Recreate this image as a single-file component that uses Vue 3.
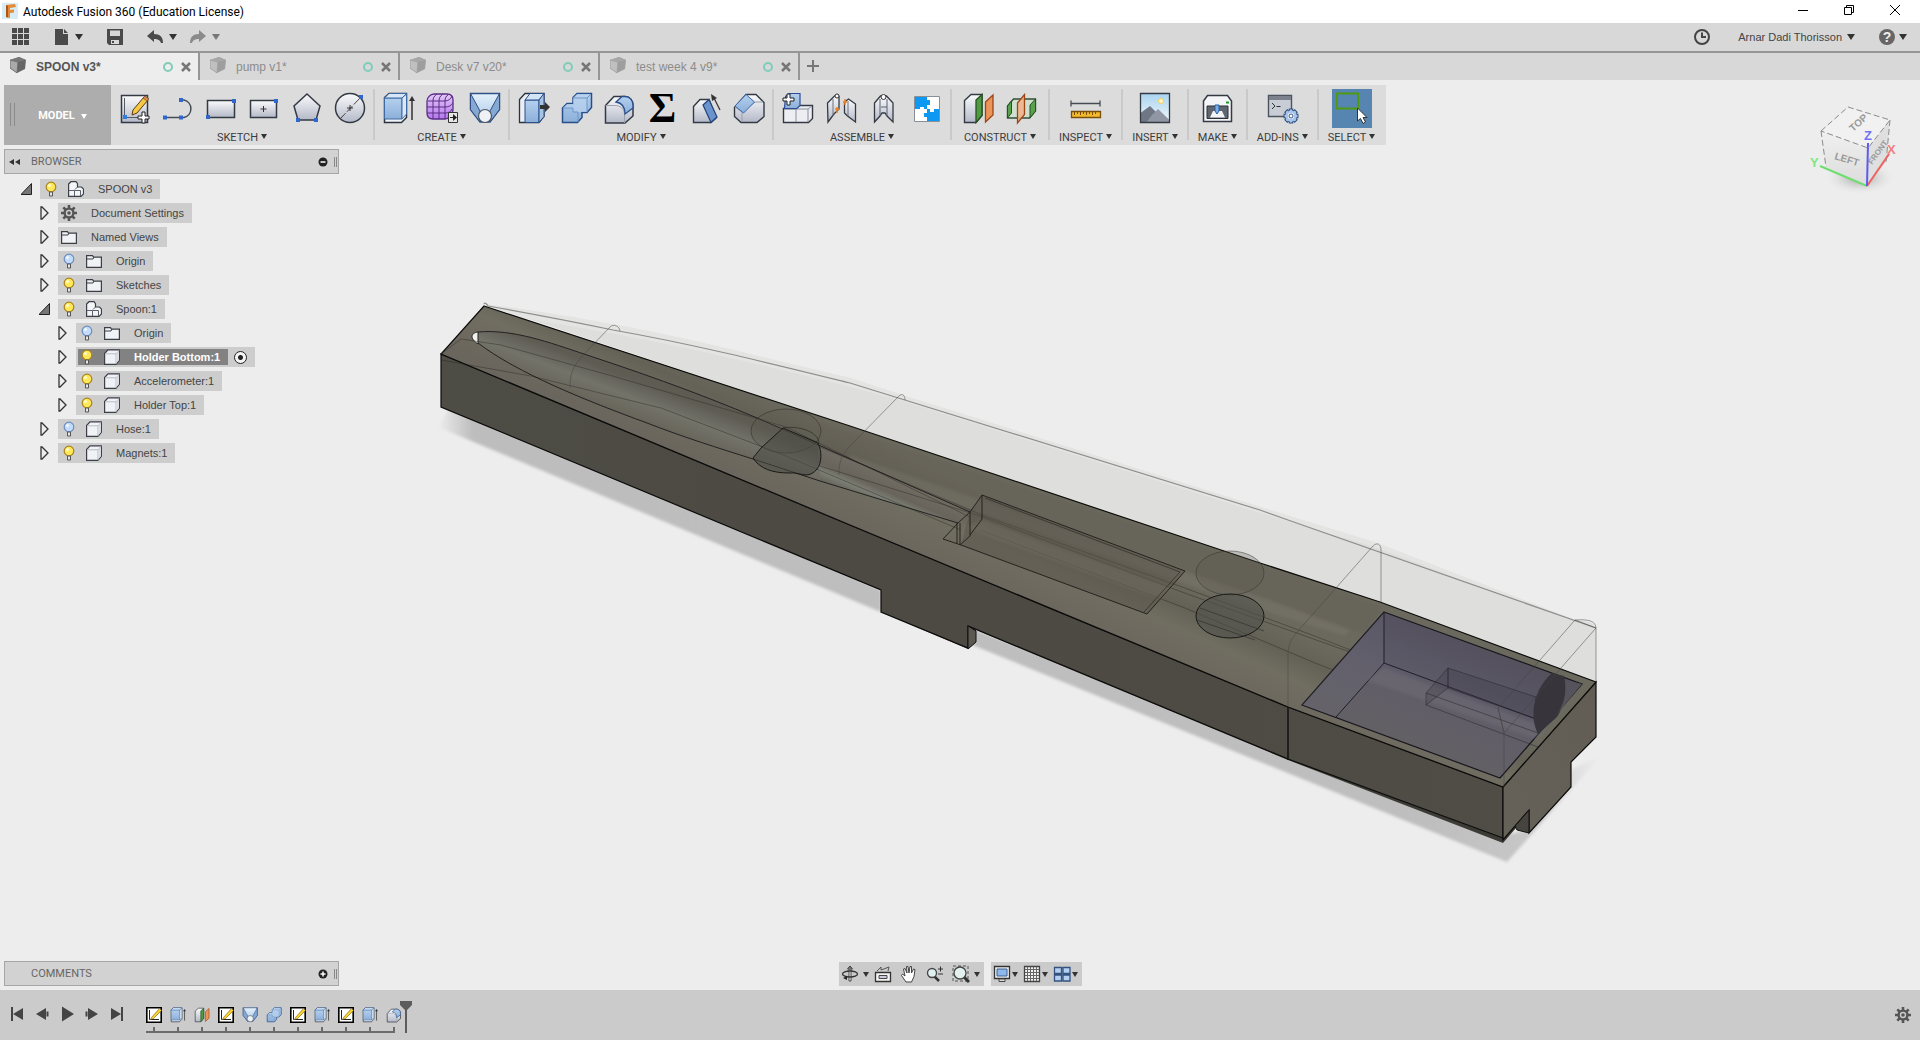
<script setup>
import { ref } from 'vue'

const tabs = [
  { name: 'SPOON v3*', active: true },
  { name: 'pump v1*', active: false },
  { name: 'Desk v7 v20*', active: false },
  { name: 'test week 4 v9*', active: false },
]

const groups = [
  { label: 'SKETCH', icons: ['sketch-new', 'line', 'rect', 'rect-center', 'polygon', 'circle'] },
  { label: 'CREATE', icons: ['extrude', 'form', 'loft'] },
  { label: 'MODIFY', icons: ['press-pull', 'combine', 'fillet', 'sigma', 'draft', 'chamfer'] },
  { label: 'ASSEMBLE', icons: ['new-component', 'joint', 'as-built-joint', 'puzzle'] },
  { label: 'CONSTRUCT', icons: ['offset-plane', 'mid-plane'], wide: true },
  { label: 'INSPECT', icons: ['measure'] },
  { label: 'INSERT', icons: ['picture'] },
  { label: 'MAKE', icons: ['printer'] },
  { label: 'ADD-INS', icons: ['scripts'] },
  { label: 'SELECT', icons: ['select'], active: true },
]

const tree = [
  { name: 'SPOON v3', level: 0, open: true, bulb: 'on', icon: 'assembly' },
  { name: 'Document Settings', level: 1, icon: 'gear' },
  { name: 'Named Views', level: 1, icon: 'folder' },
  { name: 'Origin', level: 1, bulb: 'off', icon: 'folder' },
  { name: 'Sketches', level: 1, bulb: 'on', icon: 'folder' },
  { name: 'Spoon:1', level: 1, open: true, bulb: 'on', icon: 'assembly' },
  { name: 'Origin', level: 2, bulb: 'off', icon: 'folder' },
  { name: 'Holder Bottom:1', level: 2, bulb: 'on', icon: 'body', selected: true },
  { name: 'Accelerometer:1', level: 2, bulb: 'on', icon: 'body' },
  { name: 'Holder Top:1', level: 2, bulb: 'on', icon: 'body' },
  { name: 'Hose:1', level: 1, bulb: 'off', icon: 'body' },
  { name: 'Magnets:1', level: 1, bulb: 'on', icon: 'body' },
]

const playback = ['to-start', 'step-back', 'play', 'step-forward', 'to-end']
const features = [
  'sketch-small', 'extrude', 'offset-plane', 'sketch-small', 'loft', 'combine',
  'sketch-small', 'extrude', 'sketch-small', 'extrude', 'fillet',
]
const activeComponent = ref('Holder Bottom:1')
</script>

<template>
  <div class="app">
    <svg class="defs" aria-hidden="true">
      <defs>
        <linearGradient id="g-grey" x1="0" y1="0" x2="0" y2="1"><stop offset="0" stop-color="#fbfbfc" /><stop offset="1" stop-color="#b4b9c8" /></linearGradient>
        <linearGradient id="g-blue" x1="0" y1="0" x2="0" y2="1"><stop offset="0" stop-color="#b4d0ee" /><stop offset="1" stop-color="#8cafd9" /></linearGradient>
        <linearGradient id="g-light" x1="0" y1="0" x2="0" y2="1"><stop offset="0" stop-color="#e4f1fb" /><stop offset="1" stop-color="#a9c6e6" /></linearGradient>
        <linearGradient id="g-purple" x1="0" y1="0" x2="0" y2="1"><stop offset="0" stop-color="#e2c8f5" /><stop offset="1" stop-color="#b678ee" /></linearGradient>
        <linearGradient id="g-sky" x1="0" y1="0" x2="0" y2="1"><stop offset="0" stop-color="#a9d3ef" /><stop offset="1" stop-color="#f2f8fb" /></linearGradient>
      </defs>

      <symbol id="sketch-new" viewBox="0 0 33 33">
        <path d="M3.500 3.500h26v27h-26z" fill="url(#g-grey)" stroke="#333a44" stroke-width="1.500" />
        <path d="M6.500 6v19.500H20" fill="none" stroke="#555c66" />
        <path d="M5 23h4v4H5z" fill="#2f7fe0" />
        <path d="M15 18 26 5l4 3-11 13-5 2z" fill="#f6c945" stroke="#5a3a12" />
        <path d="m25 6 4 3 2-2-4-3z" fill="#e08a4a" stroke="#5a3a12" stroke-width=".6" />
        <path d="M24 20h3v4h4v3h-4v4h-3v-4h-4v-3h4z" fill="#fff" stroke="#222" />
      </symbol>
      <symbol id="line" viewBox="0 0 33 33">
        <path d="M4 25.500h16M20 8h3a9 9 0 0 1 0 17.500h-3" fill="none" stroke="#444b55" stroke-width="1.500" />
        <path d="M2 23.500h4v4H2zM18 23.500h4v4h-4zM18 6h4v4h-4z" fill="#2f66d0" />
      </symbol>
      <symbol id="rect" viewBox="0 0 33 33">
        <path d="M3.500 8.500h27v17h-27z" fill="url(#g-grey)" stroke="#333a44" stroke-width="1.500" />
        <path d="M2 23h4v4H2zM28 7h4v4h-4z" fill="#2f66d0" />
      </symbol>
      <symbol id="rect-center" viewBox="0 0 33 33">
        <path d="M3.500 8.500h26v17h-26z" fill="url(#g-grey)" stroke="#333a44" stroke-width="1.500" />
        <path d="M16.500 14v6M13.500 17h6" stroke="#333" />
        <path d="M27 7h4v4h-4z" fill="#2f66d0" />
      </symbol>
      <symbol id="polygon" viewBox="0 0 33 33">
        <path d="m17 2 13 12-4 14H8L4 14z" fill="url(#g-grey)" stroke="#333a44" stroke-width="1.500" />
        <path d="M6 26h4v4H6zM24 26h4v4h-4z" fill="#2f66d0" />
      </symbol>
      <symbol id="circle" viewBox="0 0 33 33">
        <circle cx="17" cy="16" r="14.500" fill="url(#g-grey)" stroke="#333a44" stroke-width="1.500" />
        <path d="M7 27 28 5" stroke="#444" stroke-dasharray="8 2" />
        <path d="M17 13v6M14 16h6" stroke="#333" />
        <path d="M26 3h4v4h-4z" fill="#2f66d0" />
      </symbol>
      <symbol id="extrude" viewBox="0 0 33 33">
        <path d="M2.500 5.500 7 1.500h17.500v24l-5 5h-17z" fill="#f1f3f6" stroke="#2b3341" stroke-width="1.500" />
        <path d="M2.500 6v21H20V6z" fill="url(#g-blue)" stroke="#3f6ba3" />
        <path d="M20 6l4.500-4V22L20 27z" fill="#dbe9f7" stroke="#3f6ba3" />
        <path d="M2.500 6 7 1.500h17.500L20 6z" fill="#d6e6f6" stroke="#3f6ba3" />
        <path d="M30 28V6" stroke="#333" stroke-width="1.500" /><path d="m27 9 3-5 3 5z" fill="#333" />
      </symbol>
      <symbol id="form" viewBox="0 0 33 33">
        <path d="M9 2h13c4 0 6 2 6 6v10c0 3-4 9-8 9H8c-4 0-6-2-6-6V9c0-3 3-7 7-7z" fill="url(#g-purple)" stroke="#5a2d86" stroke-width="1.300" />
        <path d="M3 9h17c3 0 6-2 7-5M2 15h18c3 0 6-1 8-4M2 21h18c3 0 6-1 7-4M8 27V9c0-3 1-5 4-7M14 27V9c0-3 1-5 4-7M20 27V9c0-3 1-5 3-6" fill="none" stroke="#5a2d86" />
        <path d="M23.500 20.500h9v10h-9z" fill="#e8e8e8" stroke="#333" /><path d="M25 25h3v-3l4 3.500-4 3.500v-3h-3z" fill="#222" />
      </symbol>
      <symbol id="loft" viewBox="0 0 33 33">
        <path d="M2.500 1.500h29v16L22 30H12L2.500 17.500z" fill="url(#g-light)" stroke="#2f4f86" stroke-width="1.500" />
        <path d="M2.500 1.500 12 19v11L2.500 17.500zM31.500 1.500 22 19v11l9.500-12.500z" fill="#86a9d4" stroke="#2f4f86" />
        <circle cx="17" cy="24" r="6.500" fill="#eef1f5" stroke="#4b5563" stroke-width="1.200" />
      </symbol>
      <symbol id="press-pull" viewBox="0 0 33 33">
        <path d="M2.500 7.500 8 1.500h19v23l-5 6H2.500z" fill="#eceef2" stroke="#2b3341" stroke-width="1.300" />
        <path d="M8 8h14v22.500H8z" fill="url(#g-blue)" stroke="#284f8c" /><path d="m8 8 5-6.500h14L22 8z" fill="#d3e4f6" stroke="#284f8c" /><path d="m22 8 5-6.500v23l-5 6z" fill="#a8c4e4" stroke="#284f8c" />
        <path d="M23 13h5v-3l5 5-5 5v-3h-5z" fill="#333" />
      </symbol>
      <symbol id="combine" viewBox="0 0 33 33">
        <path d="M2.500 16 7 11.500h6v-6l4-4h14.500v14l-4.500 5h-5v5l-4.500 5h-15z" fill="url(#g-blue)" stroke="#284f8c" stroke-width="1.500" />
        <path d="M3 16h10v4h14V6H13v6H7zM13 6l4-4h14l-4 4z" fill="#b9d2ee" opacity=".7" /><path d="M13 6h14v14M27 6l4-4M3 16h10v4h5v10" fill="none" stroke="#6f96c8" />
      </symbol>
      <symbol id="fillet" viewBox="0 0 33 33">
        <path d="M2.500 13.500 11 4.500h11c5 0 8 4 8 9V24l-8 7H2.500z" fill="url(#g-grey)" stroke="#333a44" stroke-width="1.500" />
        <path d="M2.500 13.500h9c6 0 9 3 10 8V31" fill="none" stroke="#9aa0ac" />
        <path d="m13 10 6-5.500h3c5 0 8 4 8 9V16l-8 6c0-6-2-11-9-12z" fill="url(#g-blue)" stroke="#284f8c" stroke-width="1.300" />
      </symbol>
      <symbol id="draft" viewBox="0 0 33 33">
        <path d="M4.500 14.500 11 7.500h9L27 26l-5 4.500H4.500z" fill="url(#g-grey)" stroke="#333a44" stroke-width="1.400" />
        <path d="m14 13 6-5.500L28 25l-6 5.500z" fill="#6c94cc" stroke="#24467c" stroke-width="1.300" />
        <path d="m31 18-7-14" stroke="#333" stroke-width="1.300" /><path d="m22 2 1 7 5-3z" fill="#333" />
      </symbol>
      <symbol id="chamfer" viewBox="0 0 33 33">
        <path d="M2.500 15.500 14 2.500h10l8 8v14l-7 6H9l-6.500-6z" fill="url(#g-grey)" stroke="#333a44" stroke-width="1.400" />
        <path d="M10 30V20l13-10h8M10 20l-7-5" fill="none" stroke="#9aa0ac" />
        <path d="M3 14 14 2.500 22.500 10l-11 11z" fill="url(#g-blue)" stroke="#3668aa" />
      </symbol>
      <symbol id="new-component" viewBox="0 0 33 33">
        <path d="M2.500 16.500h12l3-3h14v13l-4 4h-25z" fill="#eceef2" stroke="#333a44" stroke-width="1.400" /><path d="M15 17v13M15 17h12v13M27 17l4-3M3 17h12" fill="none" stroke="#8a909c" />
        <path d="M4.500 4.500 8 1.500h11v12l-3 3H3.500z" fill="url(#g-blue)" stroke="#2b4b9b" stroke-width="1.200" />
        <path d="M6 2h3v4h4v3H9v4H6V9H2V6h4z" fill="#fff" stroke="#222" />
      </symbol>
      <symbol id="joint" viewBox="0 0 33 33">
        <path d="m3.500 11 7-7 3-1.500 1.500 2V17l-5 5-6 8z" fill="url(#g-grey)" stroke="#333a44" stroke-width="1.300" /><path d="M9 7v17" stroke="#6b7280" /><circle cx="13" cy="4" r="2" fill="#fff" stroke="#333" />
        <path d="m31.500 12-7-5-4 3v11l3 3 8 6z" fill="url(#g-grey)" stroke="#333a44" stroke-width="1.300" /><path d="M24 9v15" stroke="#6b7280" />
        <path d="M13 15v6M21 7v6M11 17h4M19 10h4" stroke="#f08024" stroke-width="1.500" />
      </symbol>
      <symbol id="as-built-joint" viewBox="0 0 33 33">
        <path d="m7.500 11 6-7h6l6.500 7v19l-6-6-2-3h-3l-2 3-5.500 6z" fill="url(#g-grey)" stroke="#333a44" stroke-width="1.300" /><path d="M13 7v17M20 7v17M14 15h6" stroke="#5b626e" /><circle cx="16.500" cy="5" r="2.500" fill="#fff" stroke="#333" />
      </symbol>
      <symbol id="puzzle" viewBox="0 0 33 33">
        <path d="M4.500 4.500h25v25h-25z" fill="#fff" stroke="#8a8f96" />
        <path d="M5 5h12v3h3v5h-3v4h-3v-2h-4v2H5zM17 17h3v3h4v-3h5v12H17v-4h-3v-4h3z" fill="#0d99f2" />
      </symbol>
      <symbol id="offset-plane" viewBox="0 0 33 33">
        <path d="M2.500 8.500 9 2.500h11v21l-6 7H2.500z" fill="url(#g-grey)" stroke="#333a44" stroke-width="1.400" /><path d="m14 8 6-5.500v21l-6 7z" fill="#4f9a43" stroke="#26531f" stroke-width="1.300" />
        <path d="m23.500 10 7.500-7v20l-7.500 7z" fill="#ec9559" stroke="#9c4517" stroke-width="1.300" />
      </symbol>
      <symbol id="mid-plane" viewBox="0 0 33 33">
        <path d="m2.500 14 6-7h22v12l-6 7h-22z" fill="#cfe0d0" stroke="#2f4f35" stroke-width="1.400" /><path d="m2.500 14 4-5v12l-4 5zM25 13l5.500-6v12L25 26z" fill="#5aa04d" stroke="#26531f" /><path d="m12.500 11 7-8.500v20l-7 8.500z" fill="#f0b48c" fill-opacity=".9" stroke="#9c4517" stroke-width="1.300" />
      </symbol>
      <symbol id="measure" viewBox="0 0 33 33">
        <path d="M2 11.500h29M2 8.500v6M31 8.500v6" stroke="#444b55" stroke-width="1.300" />
        <path d="M2.500 19.500h29v6h-29z" fill="#f3bb2c" stroke="#7a4f0c" stroke-width="1.300" /><path d="M5.500 20v3M8.500 20v2M11.500 20v3M14.500 20v2M17.500 20v3M20.500 20v2M23.500 20v3M26.500 20v2" stroke="#7a4f0c" />
      </symbol>
      <symbol id="picture" viewBox="0 0 33 33">
        <path d="M2.500 1.500h29v29h-29z" fill="url(#g-sky)" /><circle cx="23" cy="9" r="2.500" fill="#fff6c0" stroke="#f2cf5a" />
        <path d="M2.500 21 12 14l8 8 2 8.500H2.500z" fill="#6f7784" /><path d="m14 23 6-6 11.500 11v3H8z" fill="#9097a3" /><path d="M2.500 1.500h29v29h-29z" fill="none" stroke="#333a44" stroke-width="1.300" />
      </symbol>
      <symbol id="printer" viewBox="0 0 33 33">
        <path d="m2.500 9 4-5.500h20l4 5.500v20.500h-28z" fill="#f4f5f7" stroke="#333a44" stroke-width="1.500" /><path d="M6 14h21v12.500H6z" fill="#60666f" stroke="#2c3138" /><path d="M9 25.500 12 19h9l3 6.500z" fill="#f3f4f6" /><path d="M14 13h4v6l-2 3-2-3z" fill="#79aee8" stroke="#2c5fa0" /><path d="M25 9.500h3v2h-3z" fill="#189a2c" />
      </symbol>
      <symbol id="scripts" viewBox="0 0 33 33">
        <path d="M2.500 3.500h23v21h-23z" fill="#c8ccd5" stroke="#4c525e" stroke-width="1.400" /><path d="M3 4h22v4H3z" fill="#7b818d" /><path d="m6 11 3 3-3 3M10.500 14.500h4" fill="none" stroke="#2d3238" />
        <path d="M25 16.500v15M17.500 24h15M19.700 18.700l10.600 10.600M30.300 18.700 19.700 29.300" stroke="#2f4f80" stroke-width="4.500" /><path d="M25 17.500v13M18.500 24h13M20.400 19.400l9.200 9.200M29.600 19.400l-9.200 9.200" stroke="#a9c6ea" stroke-width="2.500" />
        <circle cx="25" cy="24" r="4.300" fill="#fff" stroke="#a9c6ea" stroke-width="2.500" /><circle cx="25" cy="24" r="2" fill="#fff" stroke="#34537f" />
      </symbol>
      <symbol id="select" viewBox="0 0 33 33">
        <path d="M2 1.500h21v15H2z" fill="none" stroke="#4f9a12" stroke-width="2" /><path d="M22.500 16v13l3-2.500 2.500 5 2.500-1.500-2.500-4.500h4z" fill="#fff" stroke="#333" />
      </symbol>
      <symbol id="sketch-small" viewBox="0 0 16 16">
        <path d="M.8.800h14.400v14.400H.8z" fill="#fff" stroke="#000" stroke-width="1.600" /><path d="M3.500 3v9.500H13" fill="none" stroke="#222" /><path d="m5.500 10.500 8-9 2 2-8 8-3 1z" fill="#f8d22c" stroke="#806010" stroke-width=".6" />
      </symbol>

      <symbol id="bulb-on" viewBox="0 0 16 16"><circle cx="8" cy="6" r="4.800" fill="#ffe95a" stroke="#a8861c" stroke-width="1.200" /><circle cx="6.500" cy="4.500" r="1.500" fill="#fffbd0" /><path d="M6.500 11h3v4h-3z" fill="#e8e8e8" stroke="#555" /></symbol>
      <symbol id="bulb-off" viewBox="0 0 16 16"><circle cx="8" cy="6" r="4.800" fill="#c3dcfa" stroke="#6d8cc0" stroke-width="1.200" /><circle cx="6.500" cy="4.500" r="1.500" fill="#f2f8ff" /><path d="M6.500 11h3v4h-3z" fill="#e8e8e8" stroke="#555" /></symbol>
      <symbol id="folder" viewBox="0 0 16 16"><path d="M.6 14.400V2.600h5.900l1 1.500h7.900v10.300z" fill="#f0f2f5" stroke="#3b4048" stroke-width="1.200" /><path d="M1 6h6l1-2" fill="none" stroke="#3b4048" /></symbol>
      <symbol id="body" viewBox="0 0 16 16"><path d="M.6 4.500 4 .800h11.400v10.500l-3.500 4H.6z" fill="#f1f2f5" stroke="#3b4048" stroke-width="1.200" /><path d="M12 15V5L15 1.500M1 4.800h11" fill="none" stroke="#b9bdc6" /><path d="M12.500 5 15 2v9l-2.500 3z" fill="#d9dce3" /></symbol>
      <symbol id="assembly" viewBox="0 0 16 16"><path d="M.6 3 3 .700h5l1.500 2V6h4l2 2v5l-2.500 2.400H.6z" fill="#f4f5f7" stroke="#3b4048" stroke-width="1.200" /><path d="M1 9.500h5.500V15M6.500 9.500h6V15M7 8.500 9.500 6" fill="none" stroke="#5c626c" /></symbol>
      <symbol id="gear" viewBox="0 0 16 16"><path d="M8 0v16M0 8h16M2.300 2.300l11.400 11.400M13.700 2.300 2.300 13.700" stroke="#555" stroke-width="2.600" /><circle cx="8" cy="8" r="5.600" fill="#555" /><circle cx="8" cy="8" r="3.200" fill="#cdcdcd" /><circle cx="8" cy="8" r="1.800" fill="#555" /></symbol>
      <symbol id="cube" viewBox="0 0 16 16"><path d="m0 3 9-3 7 3-1 9-8 4-7-5z" fill="#666" /><path d="m0 3 8 2-1 11-7-5z" fill="#aaa" stroke="#666" stroke-width=".8" /><path d="m0 3 9-3 7 3-8 2z" fill="#777" /></symbol>

      <symbol id="to-start" viewBox="0 0 16 16"><path d="M2 1h2v14H2zM14 2v12L4 8z" fill="#444" /></symbol>
      <symbol id="step-back" viewBox="0 0 16 16"><path d="M12 2v12L2 8zM12.500 5.500h2v5h-2z" fill="#444" /></symbol>
      <symbol id="play" viewBox="0 0 16 16"><path d="m3 .500 12 7.500-12 7.500z" fill="#444" /></symbol>
      <symbol id="step-forward" viewBox="0 0 16 16"><path d="m4 2 10 6-10 6zM1.500 5.500h2v5h-2z" fill="#444" /></symbol>
      <symbol id="to-end" viewBox="0 0 16 16"><path d="M12 1h2v14h-2zM2 2v12l10-6z" fill="#444" /></symbol>
    </svg>

    <header class="titlebar">
      <svg class="logo" viewBox="0 0 16 16"><path d="M0 0h16v16H0z" fill="#d7ecf5" /><path d="M4 2 13 1l1 3-6 1v2l4-.5v3L8 10v5l-4-1z" fill="#e58a35" /><path d="M4 2 6 3v11.500L4 14z" fill="#a8561b" /></svg>
      <h1>Autodesk Fusion 360 (Education License)</h1>
      <div class="window-buttons">
        <button aria-label="Minimize"><svg viewBox="0 0 12 12"><path d="M1 6.500h10" stroke="#000" /></svg></button>
        <button aria-label="Restore"><svg viewBox="0 0 12 12"><path d="M1.500 3.500h7v7h-7zM3.500 3.500v-2h7v7h-2" fill="none" stroke="#000" /></svg></button>
        <button aria-label="Close"><svg viewBox="0 0 12 12"><path d="m1 1 10 10M11 1 1 11" stroke="#000" /></svg></button>
      </div>
    </header>

    <nav class="quickbar">
      <button class="qb grid-btn" aria-label="Data panel"><svg viewBox="0 0 18 18"><path d="M0 0h5v5H0zM6 0h5v5H6zM12 0h5v5h-5zM0 6h5v5H0zM6 6h5v5H6zM12 6h5v5h-5zM0 12h5v5H0zM6 12h5v5H6zM12 12h5v5h-5z" fill="#4a4a4a" /></svg></button>
      <button class="qb file-btn" aria-label="File"><svg viewBox="0 0 18 18"><path d="M3 1h8v5h5v11H3z" fill="#4a4a4a" /><path d="m12 1 4 4h-4z" fill="#4a4a4a" /></svg><i class="caret"></i></button>
      <button class="qb save-btn" aria-label="Save"><svg viewBox="0 0 18 18"><path d="M1 1h16v16H3l-2-2z" fill="#4a4a4a" /><path d="M4 2.500h10V8H4zM5 12h8v4H5z" fill="#d8d8d8" /><path d="M6 13h2v2H6z" fill="#4a4a4a" /></svg></button>
      <button class="qb undo-btn" aria-label="Undo"><svg viewBox="0 0 18 18"><path d="M1 8 8 2v4c6 0 9 3 9 9h-2c-1-3-3-4-7-4v3z" fill="#4a4a4a" /></svg><i class="caret"></i></button>
      <button class="qb redo-btn" aria-label="Redo"><svg viewBox="0 0 18 18"><path d="m17 8-7-6v4c-6 0-9 3-9 9h2c1-3 3-4 7-4v3z" fill="#8a8a8a" /></svg><i class="caret dim"></i></button>
      <div class="account">
        <button class="clock" aria-label="Job status"><svg viewBox="0 0 18 18"><circle cx="9" cy="9" r="7" fill="none" stroke="#444" stroke-width="2" /><path d="M9 4.500V9h4" fill="none" stroke="#444" stroke-width="2" /></svg></button>
        <button class="user">Arnar Dadi Thorisson<i class="caret"></i></button>
        <button class="help" aria-label="Help"><b>?</b><i class="caret"></i></button>
      </div>
    </nav>

    <div class="tabs" role="tablist">
      <div v-for="tab in tabs" :key="tab.name" class="tab" :class="{ active: tab.active }">
        <button class="tab-name" role="tab" :aria-selected="tab.active"><svg class="tab-icon"><use href="#cube" /></svg>{{ tab.name }}</button>
        <i class="ring"></i>
        <button class="close" aria-label="Close tab"><svg viewBox="0 0 10 10"><path d="m1 1 8 8M9 1 1 9" stroke="currentColor" stroke-width="2.500" /></svg></button>
      </div>
      <button class="add-tab" aria-label="New tab"><svg viewBox="0 0 12 12"><path d="M6 0v12M0 6h12" stroke="#777" stroke-width="2" /></svg></button>
    </div>

    <main class="workspace">
      <svg class="scene" viewBox="0 80 1920 910" role="img" aria-label="Spoon holder model">
        <defs>
          <linearGradient id="top-face" gradientUnits="userSpaceOnUse" x1="800" y1="410" x2="764" y2="490"><stop offset="0" stop-color="#6b685d" /><stop offset=".25" stop-color="#646156" /><stop offset=".5" stop-color="#706d61" /><stop offset="1" stop-color="#6b665d" /></linearGradient>
          <linearGradient id="front-face" x1="0" y1="0" x2="1" y2="0"><stop offset="0" stop-color="#4d4c45" /><stop offset=".5" stop-color="#4d4943" /><stop offset="1" stop-color="#4f4d46" /></linearGradient>
          <linearGradient id="cavity" gradientUnits="userSpaceOnUse" x1="680" y1="375" x2="655" y2="440"><stop offset="0" stop-color="#5b5850" /><stop offset=".3" stop-color="#5f5c54" /><stop offset=".55" stop-color="#73736a" /><stop offset=".75" stop-color="#6b685e" /><stop offset="1" stop-color="#5c5b52" /></linearGradient>
          <linearGradient id="cavity-end" gradientUnits="userSpaceOnUse" x1="895" y1="470" x2="880" y2="505"><stop offset="0" stop-color="#767167" /><stop offset=".6" stop-color="#68645b" /><stop offset=".8" stop-color="#7c7f75" /><stop offset="1" stop-color="#68675d" /></linearGradient>
          <linearGradient id="pocket" gradientUnits="userSpaceOnUse" x1="1475" y1="640" x2="1430" y2="750"><stop offset="0" stop-color="#54505c" /><stop offset=".3" stop-color="#595665" /><stop offset=".55" stop-color="#605d69" /><stop offset="1" stop-color="#636065" /></linearGradient>
          <linearGradient id="right-face" x1="0" y1="1" x2="1" y2="0"><stop offset="0" stop-color="#656259" /><stop offset="1" stop-color="#625c54" /></linearGradient>
          <linearGradient id="shade" x1="0" y1="0" x2="1" y2="0"><stop offset="0" stop-color="#bdbdbd" stop-opacity="0" /><stop offset=".03" stop-color="#bdbdbd" /><stop offset=".85" stop-color="#bebebe" /><stop offset=".95" stop-color="#c8c8c8" /><stop offset="1" stop-color="#d4d4d4" stop-opacity="0" /></linearGradient>
          <filter id="soft"><feGaussianBlur stdDeviation="1.500" /></filter>
        </defs>

        <path d="M438 427 455 400 881 590v22zM960 640l16-10 527 205 26-5 42-60 31-15-95 107z" fill="url(#shade)" filter="url(#soft)" />

        <path d="M484 304c40 5 90 13 133 21 80 15 160 36 233 53l52 17 358 112 117 36 198 77c14 1 21 3 21 10v54L850 426z" fill="#dededc" />
        <path d="M484 304c40 5 90 13 133 21 80 15 160 36 233 53l52 17 358 112 117 36 198 77-3 1-197-74-118-35-358-112-52-14c-75-19-165-40-237-53-45-8-90-16-129-21z" fill="#e4e4e3" />

        <path d="m441 407 440 183v22l87 37 8-7v-12l312 130 215 83 26-30v20l42-46v-25l25-25v-55l-93 105z" fill="#3c3b36" />
        <path d="m441 354 409 171 438 182 215 80v51l-215-79-320-133v22l-87-36v-22L441 407z" fill="url(#front-face)" stroke="#0c0c0b" stroke-width="1.200" />
        <path d="m968 626 8 5v11l-8 7z" fill="#5b5851" stroke="#111" />
        <path d="m1503 787 93-105v55l-25 25v25l-42 46v-23l-26 30z" fill="url(#right-face)" stroke="#0c0c0b" stroke-width="1.200" />
        <path d="m1529 810-14 16 2 4 12 3z" fill="#46443e" stroke="#111" />
        <path d="M484 306 850 426l410 137 120 39 216 80-93 105-215-80-438-182-409-171z" fill="url(#top-face)" stroke="#0c0c0b" stroke-width="1.200" />
        <path d="M820 421 1260 565l120 40v7l-15 22L820 452z" fill="#5b584e" opacity=".22" filter="url(#soft)" />
        <path d="m850 455 420 145 80 30-5 6-80-25-415-143z" fill="#858277" opacity=".28" filter="url(#soft)" />

        <path d="M478 332c35-3 70 10 109 23 70 23 135 47 193 73l190 84-12 11-138-42-67-22c-35-11-70-22-106-36-60-22-130-50-169-80-8-6-6-10 0-11z" fill="url(#cavity)" />
        <path d="m818 445 152 67-12 11-138-42z" fill="url(#cavity-end)" />
        <path d="M478 332c35-3 70 10 109 23 70 23 135 47 193 73l190 84M958 523l-138-42-67-22c-35-11-70-22-106-36-60-22-130-50-169-80" fill="none" stroke="#222" />
        <path d="M478 332v12c-8-5-8-11 0-12z" fill="#f0f0ee" stroke="#222" />
        <g fill="none" stroke="#24231f" stroke-opacity=".4">
          <path d="m441 354 20-15 40 6 115 32 170 50 184 90" />
          <path d="m441 360 90 16 130 32 120 46 180 76" />
          <path d="m820 447 162 68 200 72 130 48 72 28" />
          <path d="m820 466 160 50 210 79 160 57" />
          <path d="m980 530 205 78 130 55 65 25" />
        </g>
        <ellipse cx="786" cy="431" rx="35" ry="22" fill="#57554c" fill-opacity=".2" stroke="#33322c" stroke-opacity=".6" />
        <path d="m783 428 35 15c4 8 4 20-1 26-3 4-7 6-11 6-5 0-10-3-17-2-16 0-29-4-36-15l8-10z" fill="#4b4a43" fill-opacity=".55" stroke="#191916" />
        <path d="M783 428c20-3 36 6 36 15" fill="none" stroke="#222" stroke-opacity=".6" />
        <ellipse cx="1230" cy="573" rx="34" ry="22" fill="#57554c" fill-opacity=".25" stroke="#33322c" stroke-opacity=".5" />
        <ellipse cx="1230" cy="616" rx="34" ry="22" fill="#50514b" fill-opacity=".6" stroke="#191916" />
        <path d="m1200 608 64 23M1197 620l58 20" stroke="#222" stroke-opacity=".5" />

        <path d="m982 495 203 76-38 43-186-69 9-33z" fill="#57544b" fill-opacity=".5" />
        <path d="m982 520 190 68-12 12-195-72z" fill="#7a7469" opacity=".35" filter="url(#soft)" />
        <path d="m970 512 12-17 203 76-38 43-186-69-18-6 15-16" fill="none" stroke="#24231f" />
        <path d="m985 498 195 74-36 40" fill="none" stroke="#24231f" stroke-opacity=".6" />
        <path d="M982 495v24l-12 16M970 512v24l-10 9v-22M957 523v20M958 523l12-11" fill="none" stroke="#24231f" />

        <path d="m1384 612 198 72-82 94-198-73z" fill="url(#pocket)" stroke="#17161c" stroke-width="1.200" />
        <path d="m1384 612v51l-48 54-34-12z" fill="#6d6a78" fill-opacity=".25" />
        <path d="M1384 612v51l-48 54M1384 663l163 60" fill="none" stroke="#1f1e27" />
        <path d="m1384 668 163 60-9 12-172-60z" fill="#77757c" opacity=".35" filter="url(#soft)" />
        <path d="m1448 668 88 29v22l-88-31zM1448 668v20l-22 17v-12zM1426 705l112 42M1426 693l112 40" fill="#3f3c47" fill-opacity=".3" stroke="#25242c" stroke-opacity=".5" />
        <path d="m1552 673 12 3c4 14 0 30-7 41l-19 17c-9-18-5-44 14-61z" fill="#37353b" />
        <path d="m1565 680 17 4-26 31c8-10 11-22 9-35z" fill="#56535c" />

        <path d="M484 304c1-2 3 0 4 2 45 8 82 15 125 24 80 14 160 34 237 53l410 127 28 10 308 108" fill="none" stroke="#555" stroke-opacity=".6" stroke-width="1.200" />
        <g fill="none" stroke="#444" stroke-opacity=".5">
          <path d="M1596 628v54" />
          <path d="M570 388c0-14 2-22 18-38l22-23c3-3 9-2 10 4" />
          <path d="M839 475c0-14 2-18 10-28l50-51c3-3 6-1 6 4" />
          <path d="M1288 707v-52c0-12 5-18 10-24l75-85c4-4 8-2 8 4v52" />
          <path d="M1596 628c0-7-8-9-21-8l-77 88 6 25v54M1596 628l-92 105M1575 620l21 8M1498 708l6 25" />
        </g>
        <path d="M1288 707v53" stroke="#111" stroke-width="1.500" />
      </svg>

      <svg class="viewcube" viewBox="0 0 96 96" role="img" aria-label="View cube">
        <defs>
          <radialGradient id="cube-shadow"><stop offset="0" stop-color="#9a9a9a" /><stop offset="1" stop-color="#ededed" stop-opacity="0" /></radialGradient>
          <linearGradient id="cube-left" x1="0" y1="0" x2="0" y2="1"><stop offset="0" stop-color="#f0f0f0" /><stop offset="1" stop-color="#dcdcdc" /></linearGradient>
        </defs>
        <ellipse cx="56" cy="78" rx="36" ry="17" fill="url(#cube-shadow)" />
        <path d="m17 31 27-24 42 13-22 28z" fill="#f1f1f1" />
        <path d="m17 31 47 17-1 38-41-19z" fill="url(#cube-left)" />
        <path d="m64 48 22-28-4 42-19 24z" fill="#dfdfdf" />
        <path d="m17 31 27-24 42 13-22 28zM17 31l5 36M86 20l-4 42" fill="none" stroke="#8b8b8b" stroke-dasharray="6 3" />
        <g class="cube-text">
          <text transform="translate(49 32) rotate(-42)">TOP</text>
          <text transform="translate(30 59) rotate(17)">LEFT</text>
          <text class="front" transform="translate(68 65) rotate(-54)">FRONT</text>
        </g>
        <path d="m63 86-47-20" stroke="#6fdd6f" stroke-width="2" />
        <path d="m63 86 22-32" stroke="#ee6262" stroke-width="2" />
        <path d="M63 86 64 43" stroke="#5b5bee" stroke-width="2" />
        <g class="axis"><text x="6" y="67" fill="#7fe87f">Y</text><text x="60" y="40" fill="#7272f4">Z</text><text x="83" y="54" fill="#f38080">X</text></g>
      </svg>

      <div class="ribbon">
        <button class="mode"><span class="grip"></span>MODEL<i class="caret"></i></button>
        <section v-for="group in groups" :key="group.label" class="group">
          <div class="tools" :class="{ wide: group.wide }">
            <button v-for="icon in group.icons" :key="icon" class="tool" :class="{ active: group.active }" :aria-label="icon">
              <span v-if="icon === 'sigma'" class="sigma">Σ</span>
              <svg v-else><use :href="'#' + icon" /></svg>
            </button>
          </div>
          <button class="group-label">{{ group.label }}<i class="caret"></i></button>
        </section>
      </div>

      <aside class="browser">
        <div class="panel">
          <button class="collapse" aria-label="Collapse"><svg viewBox="0 0 12 8"><path d="M5 1v6L0 4zM11 1v6L6 4z" fill="#333" /></svg></button>
          <h2>BROWSER</h2>
          <button class="toggle" aria-label="Minimize panel"><svg viewBox="0 0 10 10"><circle cx="5" cy="5" r="4.500" fill="#222" /><path d="M2.500 5h5" stroke="#fff" stroke-width="1.500" /></svg></button>
          <span class="handle"></span>
        </div>
        <ul class="tree">
          <li v-for="(node, i) in tree" :key="i" :class="'level-' + node.level">
            <button class="arrow" :aria-label="node.open ? 'Collapse' : 'Expand'">
              <svg v-if="node.open" viewBox="0 0 12 14"><path d="M0 12.500h10.500V1.500z" fill="#777" stroke="#222" /></svg>
              <svg v-else viewBox="0 0 12 14"><path d="M2 1v12h1l6-6-6-6z" fill="none" stroke="#333" stroke-width="1.300" /></svg>
            </button>
            <div class="chip" :class="{ selected: node.selected }">
              <div class="chip-body">
                <svg v-if="node.bulb" class="bulb"><use :href="'#bulb-' + node.bulb" /></svg>
                <svg class="kind"><use :href="'#' + node.icon" /></svg>
                <span>{{ node.name }}</span>
              </div>
              <input v-if="node.selected" v-model="activeComponent" type="radio" name="active" :value="node.name" aria-label="Active component" />
            </div>
          </li>
        </ul>
      </aside>

      <footer class="dock">
        <div class="panel">
          <h2>COMMENTS</h2>
          <button class="toggle" aria-label="Expand comments"><svg viewBox="0 0 10 10"><circle cx="5" cy="5" r="4.500" fill="#222" /><path d="M2.500 5h5M5 2.500v5" stroke="#fff" stroke-width="1.500" /></svg></button>
          <span class="handle"></span>
        </div>
        <div class="navbar">
          <div class="nav-set">
            <button aria-label="Orbit"><svg viewBox="0 0 18 18"><path d="M8 2h2v14H8zM6.500 4 9 1l2.500 3z" fill="#fff" stroke="#444" /><ellipse cx="9" cy="9" rx="7.500" ry="3" fill="none" stroke="#333" stroke-width="1.300" /><path d="m2 13 4-2v4z" fill="#222" /></svg></button><i class="caret"></i>
            <button aria-label="Look at"><svg viewBox="0 0 18 18"><path d="M1.500 7.500h15v9h-15z" fill="#f5f5f5" stroke="#333" stroke-width="1.300" /><path d="M5 10.500h8v3H5z" fill="#ccd" stroke="#444" /><path d="m3 6 4-4v3l8-3-1 4" fill="none" stroke="#555" /></svg></button>
            <button aria-label="Pan"><svg viewBox="0 0 18 18"><path d="M6 17 1.500 10.500l1-1.500L5 11 3.500 4 5 3.500l2 4.500-.5-6.500H8L9 8l1-6.500h1.500L11.500 8l2-4 1.500.500-1 7L11.500 17z" fill="#fff" stroke="#444" /></svg></button>
            <button aria-label="Zoom"><svg viewBox="0 0 18 18"><path d="m8 11 5 5" stroke="#333" stroke-width="2.500" /><circle cx="6" cy="8" r="4.500" fill="#dff0f0" stroke="#444" stroke-width="1.300" /><path d="M12 4h5M14.500 1.500v5M12 9h5" stroke="#333" /></svg></button>
            <button aria-label="Fit"><svg viewBox="0 0 18 18"><path d="M1 1h15v15H1z" fill="none" stroke="#555" stroke-dasharray="3 2" /><path d="m12 12 5 5" stroke="#333" stroke-width="3" /><circle cx="8" cy="8" r="6" fill="#e2f0ee" stroke="#444" stroke-width="1.300" /></svg></button><i class="caret"></i>
          </div>
          <div class="nav-set views">
            <button aria-label="Display"><svg viewBox="0 0 18 18"><path d="M1.500 1.500h15v12h-15z" fill="#f3f3f3" stroke="#333" stroke-width="1.300" /><path d="M4 4h10v7H4z" fill="#8fb9ea" stroke="#3a5f96" /><path d="M6 14h6v2.500H6z" fill="#ddd" stroke="#444" /></svg></button><i class="caret"></i>
            <button aria-label="Grid"><svg viewBox="0 0 18 18"><path d="M1.500 1.500h15v15h-15z" fill="#f3f3f3" stroke="#444" stroke-width="1.300" /><path d="M4.500 2v14M7.500 2v14M10.500 2v14M13.500 2v14M2 4.500h14M2 7.500h14M2 10.500h14M2 13.500h14" stroke="#666" /></svg></button><i class="caret"></i>
            <button aria-label="Viewports"><svg viewBox="0 0 18 18"><path d="M1.500 2.500h7v6h-7zM10 2.500h7v6h-7zM1.500 10h7v6h-7zM10 10h7v6h-7z" fill="#b4d0f0" stroke="#33527f" stroke-width="1.300" /></svg></button><i class="caret"></i>
          </div>
        </div>
      </footer>
    </main>

    <div class="timeline">
      <div class="playback">
        <button v-for="p in playback" :key="p" :aria-label="p"><svg><use :href="'#' + p" /></svg></button>
      </div>
      <div class="history">
        <button v-for="(f, i) in features" :key="i" :aria-label="f"><svg><use :href="'#' + f" /></svg><i class="tick"></i></button>
        <svg class="marker" viewBox="0 0 12 32"><path d="M0 0h12v4L7 9v23H5V9L0 4z" fill="#5c5c5c" /></svg>
      </div>
      <button class="settings" aria-label="Settings"><svg><use href="#gear" /></svg></button>
    </div>
  </div>
</template>

<style>
body { margin: 0; }
</style>

<style scoped>
.app { display: flex; flex-direction: column; min-height: 100vh; background: #ededed; color: #444; font: 11px/16px "Liberation Sans", Arial, sans-serif; overflow: hidden; }
.defs { position: absolute; width: 0; height: 0; }
button { display: flex; align-items: center; justify-content: center; padding: 0; border: 0; background: none; color: inherit; font: inherit; }
svg { display: block; flex: none; }
h1, h2 { margin: 0; font-weight: 400; }
.caret { width: 0; height: 0; border: 3px solid transparent; border-top: 5px solid #333; border-bottom: 0; }

.titlebar { display: flex; align-items: center; height: 23px; background: #fff; }
.logo { width: 16px; height: 16px; margin: 0 5px 2px 2px; }
h1 { font: 12px/16px Roboto, sans-serif; color: #000; }
.window-buttons { display: flex; margin: 0 2px 3px auto; }
.window-buttons button { width: 46px; height: 20px; }
.window-buttons svg { width: 12px; height: 12px; }

.quickbar { display: flex; align-items: center; height: 28px; padding-left: 12px; background: #d8d8d8; border-bottom: 2px solid #969696; }
.qb svg { width: 18px; height: 18px; }
.qb .caret, .account .caret { border-width: 6px 4px 0; margin-left: 5px; }
.caret.dim { border-top-color: #777; }
.file-btn { margin-left: 22px; }
.save-btn { margin-left: 23px; }
.undo-btn { margin-left: 22px; }
.redo-btn { margin-left: 12px; }
.account { display: flex; align-items: center; margin-left: auto; padding-right: 13px; }
.clock svg { width: 18px; height: 18px; }
.user { margin: 0 24px 0 27px; }
.account .help .caret { margin-left: 4px; }
.help b { width: 16px; height: 16px; border-radius: 8px; background: #666; color: #eee; font-size: 14px; }

.tabs { display: flex; height: 27px; background: #d8d8d8; color: #8c8c8c; font-size: 12px; }
.tab { display: flex; align-items: center; box-sizing: border-box; width: 200px; padding: 0 7px 0 10px; border-right: 2px solid #969696; }
.tab.active { background: #ededed; color: #555; font-weight: 700; }
.tab-icon { width: 16px; height: 16px; margin: 0 10px 4px 0; opacity: .5; }
.active .tab-icon { opacity: 1; }
.ring { width: 6px; height: 6px; margin-left: auto; border: 2px solid #7fcdb8; border-radius: 50%; }
.close { margin-left: 8px; color: #777; }
.close svg { width: 10px; height: 10px; }
.add-tab { margin-left: 7px; }
.add-tab svg { width: 12px; height: 12px; margin-bottom: 2px; }

.workspace { position: relative; display: flex; flex: 1; flex-direction: column; }
.scene { position: absolute; inset: 0; width: 100%; height: 100%; }
.viewcube { position: absolute; top: 20px; right: 20px; width: 96px; height: 96px; }
.cube-text { fill: #999; font: 700 10px "Liberation Sans", sans-serif; }
.cube-text .front { font-size: 8px; }
.axis { font: 700 13px "Liberation Sans", sans-serif; }

.ribbon { position: relative; display: flex; align-self: flex-start; height: 60px; margin: 5px 0 0 4px; background: #dcdcdc; }
.mode { position: relative; width: 107px; padding: 2px 0 0 10px; background: #adadad; color: #fff; font: 700 11px/16px Roboto, sans-serif; }
.mode .caret { margin-left: 6px; border-top-color: #fff; }
.grip { position: absolute; left: 6px; top: 18px; width: 3px; height: 23px; border: solid #8b8b8b; border-width: 0 1px; }
.group { display: flex; flex-direction: column; align-items: center; margin: 4px 0 5px; border-right: 2px solid #c9c9c9; }
.group:last-child { border-color: transparent; }
.tools { display: flex; padding: 0 2px; }
.tools.wide { padding: 0 5px; }
.tool { width: 43px; height: 39px; }
.tool svg { width: 33px; height: 33px; }
.tool.active { width: 40px; background: #5585b0; }
.sigma { color: #000; font: 700 42px/33px "Liberation Serif", serif; }
.group-label { padding: 1px 9px 0; color: #3c3c3c; font: 11px/17px Roboto, sans-serif; }
.group-label .caret { margin: 0 0 2px 3px; }

.browser { position: relative; width: 335px; margin: 4px 0 0 4px; }
.panel { display: flex; align-items: center; box-sizing: border-box; width: 335px; height: 25px; padding-left: 26px; border: 1px solid #a6a6a6; background: #d2d2d2; }
.panel h2 { color: #666; font: 11px/16px Roboto, sans-serif; }
.browser .panel { padding-left: 4px; }
.collapse { margin-right: 10px; }
.collapse svg { width: 12px; height: 8px; }
.toggle { margin-left: auto; }
.toggle svg { width: 10px; height: 10px; }
.handle { width: 1px; height: 10px; margin: 0 1px 0 6px; border: solid #888; border-width: 0 1px; }
.tree { display: flex; flex-direction: column; gap: 4px; margin: 5px 0 0; padding: 0 0 0 17px; list-style: none; }
.tree li { display: flex; align-items: center; height: 20px; }
.level-1 { padding-left: 18px; }
.level-2 { padding-left: 36px; }
.arrow { justify-content: flex-start; width: 19px; }
.arrow svg { width: 12px; height: 14px; }
.chip { display: flex; align-items: center; height: 20px; background: #cdcdcd; }
.chip-body { display: flex; align-items: center; height: 20px; padding: 0 8px 0 3px; white-space: nowrap; }
.selected .chip-body { height: 16px; margin-left: 2px; padding-left: 1px; background: #828282; color: #fff; font-weight: 700; }
.bulb { width: 16px; height: 16px; margin-right: 9px; }
.kind { width: 16px; height: 16px; margin-right: 14px; }
.chip input { appearance: none; box-sizing: border-box; width: 13px; height: 13px; margin: 0 8px 0 6px; border: 1px solid #222; border-radius: 50%; background: radial-gradient(circle, #222 2px, #f5f5f5 3px); }

.dock { position: relative; display: grid; grid-template-columns: 1fr auto 1fr; align-items: end; margin: auto 4px 4px; }
.navbar { display: flex; gap: 7px; }
.nav-set { display: flex; align-items: center; height: 24px; padding: 0 4px 0 2px; background: #cbcbcb; }
.nav-set svg { width: 18px; height: 18px; }
.nav-set .caret { margin-left: 4px; }
.nav-set button + button { margin-left: 8px; }
.nav-set .caret + button { margin-left: 5px; }
.views .caret { margin-left: 1px; }

.timeline { display: flex; height: 50px; background: #cbcbcb; }
.playback { display: flex; gap: 9px; margin: 16px 0 0 9px; }
.playback button { width: 16px; height: 16px; }
.playback svg { width: 16px; height: 16px; }
.history { position: relative; display: flex; gap: 8px; height: 26px; margin: 17px 0 0 21px; }
.history::after { content: ""; position: absolute; right: 7px; bottom: 0; left: 0; height: 2px; background: #6b6b6b; }
.history button { flex-direction: column; justify-content: space-between; width: 16px; height: 24px; }
.history svg { width: 16px; height: 16px; }
.tick { width: 2px; height: 4px; background: #6b6b6b; }
.history .marker { position: absolute; top: -6px; right: -10px; width: 12px; height: 32px; }
.settings { margin: 0 9px 0 auto; }
.settings svg { width: 16px; height: 16px; }
</style>
